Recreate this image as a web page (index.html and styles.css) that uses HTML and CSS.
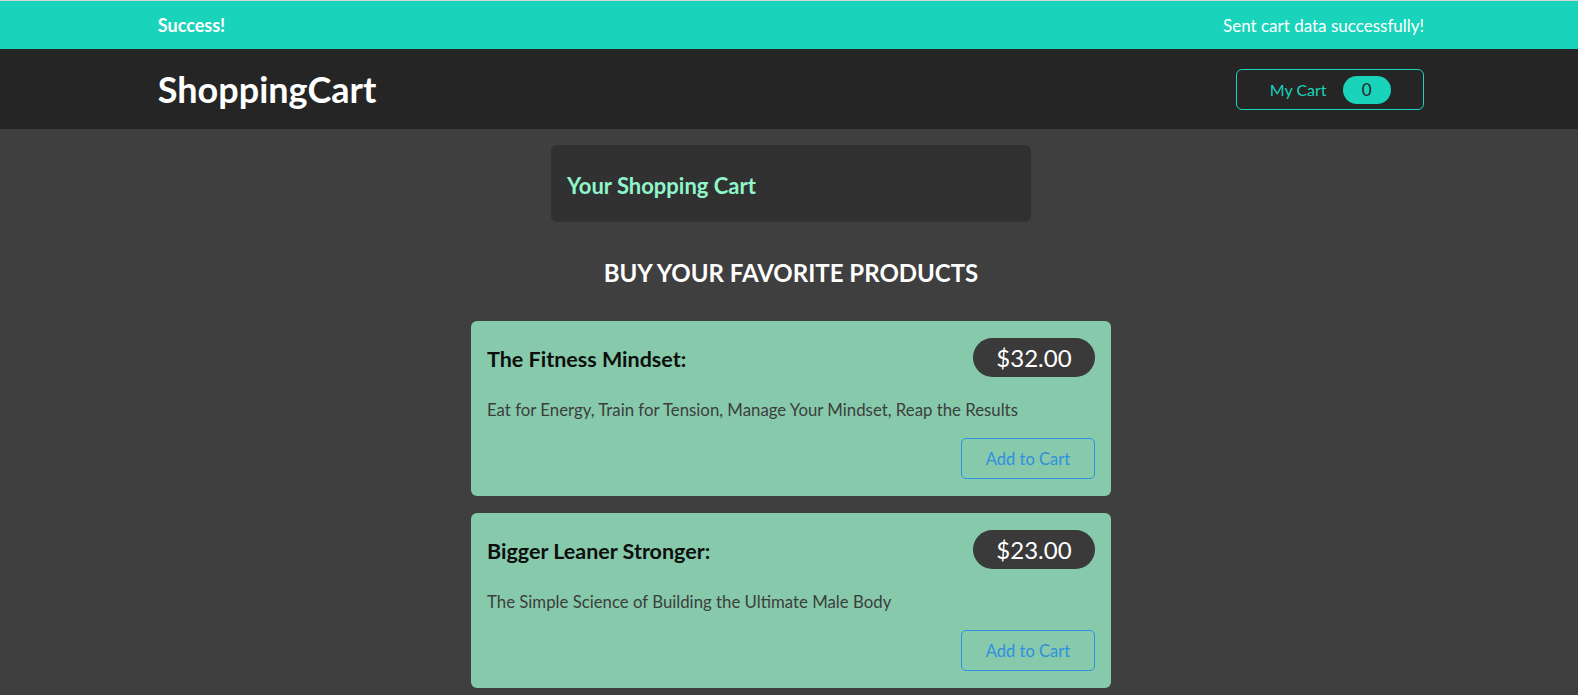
FILE: index.html
```html
<!DOCTYPE html>
<html lang="en">
<head>
<meta charset="utf-8">
<title>ShoppingCart</title>
<link rel="stylesheet" href="styles.css">
</head>
<body>
<section class="notification">
  <div class="container notification-inner">
    <h2 class="notification-title">Success!</h2>
    <p class="notification-msg">Sent cart data successfully!</p>
  </div>
</section>
<header class="header">
  <div class="container header-inner">
    <h1 class="logo">ShoppingCart</h1>
    <button class="cart-button">
      <span>My Cart</span>
      <span class="badge">0</span>
    </button>
  </div>
</header>
<main class="main">
  <section class="cart-panel">
    <h2 class="cart-title">Your Shopping Cart</h2>
  </section>
  <section class="products">
    <h2 class="products-title">BUY YOUR FAVORITE PRODUCTS</h2>
    <ul class="product-list">
      <li class="card">
        <header class="card-head">
          <h3 class="card-title">The Fitness Mindset:</h3>
          <div class="price">$32.00</div>
        </header>
        <p class="card-desc">Eat for Energy, Train for Tension, Manage Your Mindset, Reap the Results</p>
        <div class="card-actions">
          <button class="add-btn">Add to Cart</button>
        </div>
      </li>
      <li class="card">
        <header class="card-head">
          <h3 class="card-title">Bigger Leaner Stronger:</h3>
          <div class="price">$23.00</div>
        </header>
        <p class="card-desc">The Simple Science of Building the Ultimate Male Body</p>
        <div class="card-actions">
          <button class="add-btn">Add to Cart</button>
        </div>
      </li>
    </ul>
  </section>
</main>
</body>
</html>
```
FILE: styles.css
```css
* { box-sizing: border-box; }
html, body { margin: 0; padding: 0; }
body {
  font-family: Lato, "Open Sans", sans-serif;
  background: #3f3f3f;
  color: #fff;
}
.container {
  width: calc(80% + 4px);
  margin-left: 10%;
}
.notification {
  background: #1ad3bb;
  border-top: 1px solid #d6d6d6;
  height: 49px;
}
.notification-inner {
  height: 48px;
  display: flex;
  align-items: center;
  justify-content: space-between;
}
.notification-title {
  margin: 0;
  font-size: 18px;
  font-weight: 700;
}
.notification-msg {
  margin: 0;
  font-size: 17px;
}
.header {
  background: #252525;
  height: 80px;
}
.header-inner {
  height: 80px;
  display: flex;
  align-items: center;
  justify-content: space-between;
}
.logo {
  margin: 0;
  font-size: 36px;
  font-weight: 700;
  color: #fff;
}
.cart-button {
  width: 188px;
  height: 41px;
  margin-top: 1px;
  border: 1px solid #1ad3bb;
  border-radius: 6px;
  background: transparent;
  color: #1ad3bb;
  font-family: inherit;
  font-size: 16px;
  display: flex;
  align-items: center;
  justify-content: center;
  gap: 16px;
  padding: 0;
}
.badge {
  background: #1ad3bb;
  color: #252525;
  border-radius: 14px;
  width: 48px;
  height: 28px;
  display: flex;
  align-items: center;
  justify-content: center;
  font-size: 17px;
}
.main {
  padding-top: 16px;
  padding-left: 4px;
}
.cart-panel {
  width: 480px;
  margin: 0 auto;
  background: #313131;
  border-radius: 6px;
  height: 77px;
  padding: 0 16px;
  display: flex;
  align-items: center;
}
.cart-title {
  margin: 4px 0 0;
  font-size: 22px;
  font-weight: 700;
  color: #8ff6cb;
}
.products {
  width: 640px;
  margin: 0 auto;
}
.products-title {
  margin: 36px 0 0;
  text-align: center;
  font-size: 24px;
  font-weight: 700;
  line-height: 30px;
}
.product-list {
  list-style: none;
  margin: 33px 0 0;
  padding: 0;
  display: flex;
  flex-direction: column;
  gap: 17px;
}
.card {
  background: #86caab;
  border-radius: 6px;
  padding: 17px 16px 16px;
  height: 175px;
}
.card-head {
  display: flex;
  justify-content: space-between;
  align-items: center;
  height: 39px;
}
.card-title {
  margin: 2px 0 0;
  font-size: 21.5px;
  font-weight: 700;
  color: #0e0e0e;
}
.price {
  background: #3a3a3a;
  color: #fff;
  border-radius: 20px;
  width: 122px;
  height: 39px;
  display: flex;
  align-items: center;
  justify-content: center;
  font-size: 24px;
}
.card-desc {
  margin: 21px 0 0;
  font-size: 16.8px;
  line-height: 24px;
  color: #3d3d3d;
}
.card-actions {
  display: flex;
  justify-content: flex-end;
  margin-top: 16px;
}
.add-btn {
  width: 134px;
  height: 41px;
  border: 1px solid #2f8fe0;
  border-radius: 5px;
  background: transparent;
  color: #2f8fe0;
  font-family: inherit;
  font-size: 16.5px;
}
```
